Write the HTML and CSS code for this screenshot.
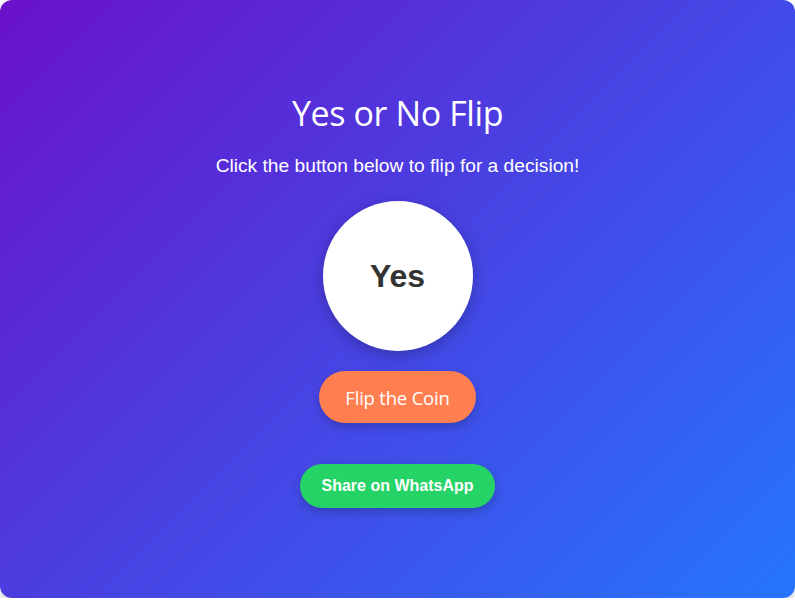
FILE: index.html
```html
<!DOCTYPE html>
<html lang="en">
<head>
    <meta charset="UTF-8">
    <title>Yes or No Flip</title>
    <link rel="stylesheet" href="styles.css">
</head>
<body>
    <div class="app">
        <h1>Yes or No Flip</h1>
        <p class="intro">Click the button below to flip for a decision!</p>
        <div class="coin" id="coin">Yes</div>
        <button class="flip-btn" id="flip">Flip the Coin</button>
        <a class="share-btn" href="#">Share on WhatsApp</a>
    </div>
</body>
</html>
```

FILE: styles.css
```css
body {
    margin: 0;
    background-color: #fff;
    font-family: "Open Sans", sans-serif;
}
.app {
    height: 598px;
    box-sizing: border-box;
    padding-top: 92px;
    display: flex;
    flex-direction: column;
    align-items: center;
    background: linear-gradient(135deg, #6a11cb, #2575fc);
    border-radius: 12px;
    box-shadow: 0 4px 10px rgba(0, 0, 0, 0.2);
    color: white;
}
h1 {
    margin: 0;
    font-size: 34px;
    font-weight: 400;
    line-height: 42px;
    letter-spacing: -0.4px;
}
.intro {
    margin: 20px 0 0 0;
    font-family: "Liberation Sans", Arial, sans-serif;
    font-size: 19.2px;
    line-height: 24px;
}
.coin {
    margin-top: 23px;
    width: 150px;
    height: 150px;
    border-radius: 50%;
    background-color: white;
    color: #333;
    display: flex;
    align-items: center;
    justify-content: center;
    font-family: "Liberation Sans", Arial, sans-serif;
    font-size: 32px;
    font-weight: bold;
    box-shadow: 0 4px 15px rgba(0, 0, 0, 0.25);
}
.flip-btn {
    margin-top: 20px;
    height: 52px;
    padding: 0 26px;
    border: none;
    border-radius: 26px;
    background-color: #ff7f50;
    color: white;
    font-family: "Open Sans", sans-serif;
    font-size: 18.5px;
    letter-spacing: -0.2px;
    box-shadow: 0 4px 10px rgba(0, 0, 0, 0.2);
    cursor: pointer;
}
.share-btn {
    margin-top: 41px;
    height: 44px;
    padding: 0 21px;
    display: flex;
    align-items: center;
    border-radius: 22px;
    background-color: #25d366;
    color: white;
    text-decoration: none;
    font-family: "Liberation Sans", Arial, sans-serif;
    font-size: 16px;
    font-weight: bold;
    box-shadow: 0 4px 10px rgba(0, 0, 0, 0.2);
}
```
